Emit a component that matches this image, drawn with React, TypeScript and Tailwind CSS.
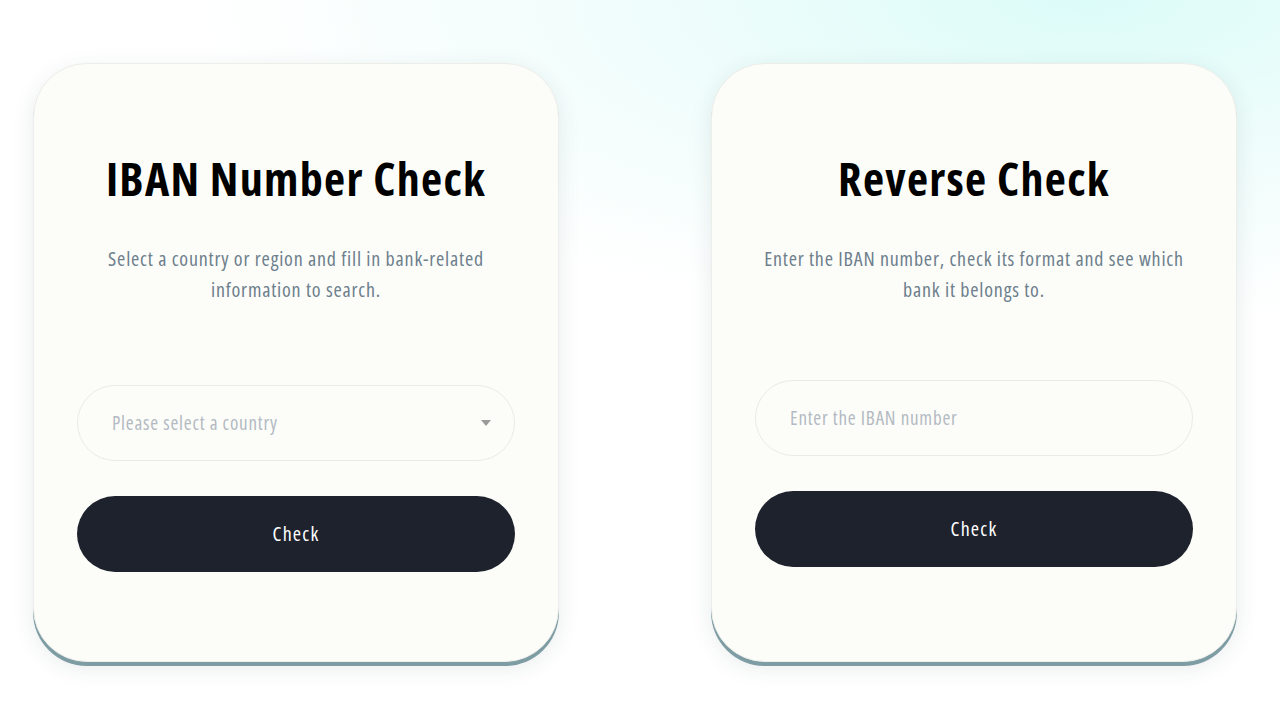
function Card({
  title,
  description,
  children,
}: {
  title: string;
  description: string;
  children: React.ReactNode;
}) {
  return (
    <section className="flex h-[599px] w-[526px] flex-col items-center rounded-[54px] border border-[#eceeea] bg-[#fcfdf9] px-[43px] pt-[86px] shadow-[0_4px_0_#7e9ca3,0_6px_22px_rgba(40,60,70,0.10)]">
      <h1 className="text-[46px] font-bold leading-[56px] tracking-[1.3px] text-black [font-stretch:80%]">
        {title}
      </h1>
      <p className="mt-[37px] w-full text-center text-[20px] leading-[31px] tracking-[0.8px] text-[#6e7f8d] [font-stretch:82%]">
        {description}
      </p>
      {children}
    </section>
  );
}

export default function App() {
  return (
    <main className="relative h-[720px] w-full overflow-hidden bg-white font-['Open_Sans','Noto_Sans',sans-serif]">
      <div className="pointer-events-none absolute inset-0 bg-[radial-gradient(ellipse_70%_45%_at_85%_0%,#dcfcf9_0%,#eefdfb_45%,rgba(255,255,255,0)_100%)]" />
      <div className="relative flex gap-[152px] pl-[33px] pt-[63px]">
        <Card
          title="IBAN Number Check"
          description="Select a country or region and fill in bank-related information to search."
        >
          <button className="mt-[80px] flex h-[76px] w-full items-center justify-between rounded-full border border-[#e8ebe7] bg-[#fcfdf9] pl-[34px] pr-[20px] text-[19px] tracking-[0.8px] text-[#b3bac2] [font-stretch:82%]">
            <span>Please select a country</span>
            <svg width="12" height="8" viewBox="0 0 12 8" className="mr-[2px]">
              <path d="M1 1h10L6 7z" fill="#9a9a9a" />
            </svg>
          </button>
          <button className="mt-[35px] h-[76px] w-full rounded-full bg-[#1e222d] text-[20px] tracking-[1.2px] text-white [font-stretch:82%]">
            Check
          </button>
        </Card>
        <Card
          title="Reverse Check"
          description="Enter the IBAN number, check its format and see which bank it belongs to."
        >
          <input
            placeholder="Enter the IBAN number"
            className="mt-[75px] h-[76px] w-full rounded-full border border-[#e8ebe7] bg-[#fcfdf9] px-[34px] text-[19px] tracking-[0.8px] outline-none placeholder:text-[#b3bac2] [font-stretch:82%]"
          />
          <button className="mt-[35px] h-[76px] w-full rounded-full bg-[#1e222d] text-[20px] tracking-[1.2px] text-white [font-stretch:82%]">
            Check
          </button>
        </Card>
      </div>
    </main>
  );
}
